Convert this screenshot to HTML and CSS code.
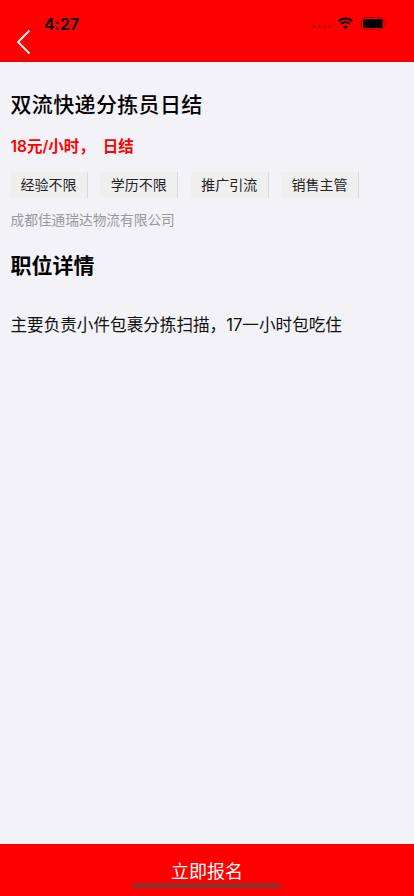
FILE: index.html
```
<!DOCTYPE html>
<html lang="zh">
<head>
<meta charset="utf-8">
<title>职位详情</title>
<link rel="stylesheet" href="styles.css">
</head>
<body>
<div class="page">
  <header class="header">
    <div class="status">
      <span class="time">4:27</span>
      <div class="status-icons">
        <span class="dots"><i></i><i></i><i></i><i></i></span>
        <svg class="wifi" width="17" height="13" viewBox="0 0 17 13"><path d="M8.5 2.6c2.4 0 4.6.9 6.2 2.5l1.3-1.4C14.100 1.700 11.400.5 8.500.5S2.900 1.700 1 3.700l1.300 1.400C3.900 3.500 6.100 2.600 8.500 2.600z"/><path d="M8.500 6.200c1.400 0 2.700.5 3.700 1.500l1.300-1.400c-1.300-1.300-3-2-5-2s-3.700.7-5 2l1.300 1.400c1-1 2.300-1.500 3.700-1.500z"/><path d="M8.500 8.800c-.9 0-1.700.3-2.300.9l2.300 2.600 2.300-2.600c-.6-.6-1.400-.9-2.300-.9z"/></svg>
        <svg class="battery" width="26" height="13" viewBox="0 0 26 13"><rect x=".5" y=".5" width="22.500" height="12" rx="3" fill="none" stroke="#b00000"/><rect x="2" y="2" width="19.500" height="9" rx="1.500" fill="#000"/><path d="M24.500 4.500c.8.300 1.300 1 1.300 2s-.5 1.700-1.300 2z" fill="#b00000"/></svg>
      </div>
    </div>
    <div class="nav">
      <svg class="back" width="16" height="26" viewBox="0 0 16 26"><path d="M13.500 1.500 2 13l11.500 11.500" fill="none" stroke="#fff" stroke-width="1.800"/></svg>
    </div>
  </header>
  <main class="main">
    <h1 class="title">双流快递分拣员日结</h1>
    <p class="salary">18元/小时， 日结</p>
    <ul class="tags">
      <li class="tag">经验不限</li>
      <li class="tag">学历不限</li>
      <li class="tag">推广引流</li>
      <li class="tag">销售主管</li>
    </ul>
    <p class="company">成都佳通瑞达物流有限公司</p>
    <h2 class="section">职位详情</h2>
    <p class="desc">主要负责小件包裹分拣扫描，17一小时包吃住</p>
  </main>
  <footer class="footer">
    <button class="apply">立即报名</button>
    <span class="home"></span>
  </footer>
</div>
</body>
</html>
```
FILE: styles.css
```
* { box-sizing: border-box; }
html, body { margin: 0; padding: 0; height: 100%; }
body {
  font-family: "Inter", "Liberation Sans", "Noto Sans CJK SC", sans-serif;
  background: #f2f2f7;
  color: #000;
}
.page { height: 896px; display: flex; flex-direction: column; }
.header {
  height: 62px;
  background: #f00;
  display: grid;
  grid-template-columns: 1fr;
  grid-template-rows: 1fr;
}
.status, .nav { grid-column: 1; grid-row: 1; }
.status {
  display: flex;
  justify-content: space-between;
  align-items: flex-start;
  padding: 14px 27px 0 44px;
}
.time { font-size: 16px; line-height: 20px; font-weight: 600; letter-spacing: .1px; }
.status-icons { display: flex; align-items: center; gap: 5px; margin-top: 3px; }
.dots { display: flex; gap: 2px; margin-top: 5px; margin-right: 1px; }
.dots i { width: 3px; height: 3px; border-radius: 50%; background: #a80000; }
.wifi { display: block; }
.battery { display: block; margin-left: 2px; }
.nav { padding: 29px 0 0 16px; }
.back { display: block; }
.main { flex: 1; padding: 0 10.500px; }
.title { margin: 29px 0 0; font-size: 21px; line-height: 28px; font-weight: 500; letter-spacing: .35px; }
.salary { margin: 17px 0 0; font-size: 15.500px; line-height: 22px; font-weight: 600; color: #f00; word-spacing: 4px; }
.tags { list-style: none; display: flex; gap: 12.330px; margin: 14px 0 0 -.500px; padding: 0; }
.tag {
  width: 78px;
  height: 26px;
  background: #efeff0;
  border-right: 1px solid #d9d9d9;
  font-size: 14px;
  line-height: 26px;
  text-align: center;
  color: #222;
}
.company { margin: 12px 0 0; font-size: 13.700px; line-height: 20px; color: #999; }
.section { margin: 22px 0 0; font-size: 21px; line-height: 28px; font-weight: 600; }
.desc { margin: 33px 0 0; font-size: 16.600px; line-height: 24px; color: #111; }
.footer { height: 52px; position: relative; }
.apply {
  display: block;
  width: 100%;
  height: 52px;
  border: 0;
  background: #f00;
  color: #fff;
  font-family: inherit;
  font-size: 18px;
  padding: 0;
}
.home {
  position: absolute;
  left: 133px;
  bottom: 8px;
  width: 148px;
  height: 5px;
  border-radius: 3px;
  background: #8f2f2f;
}
```
